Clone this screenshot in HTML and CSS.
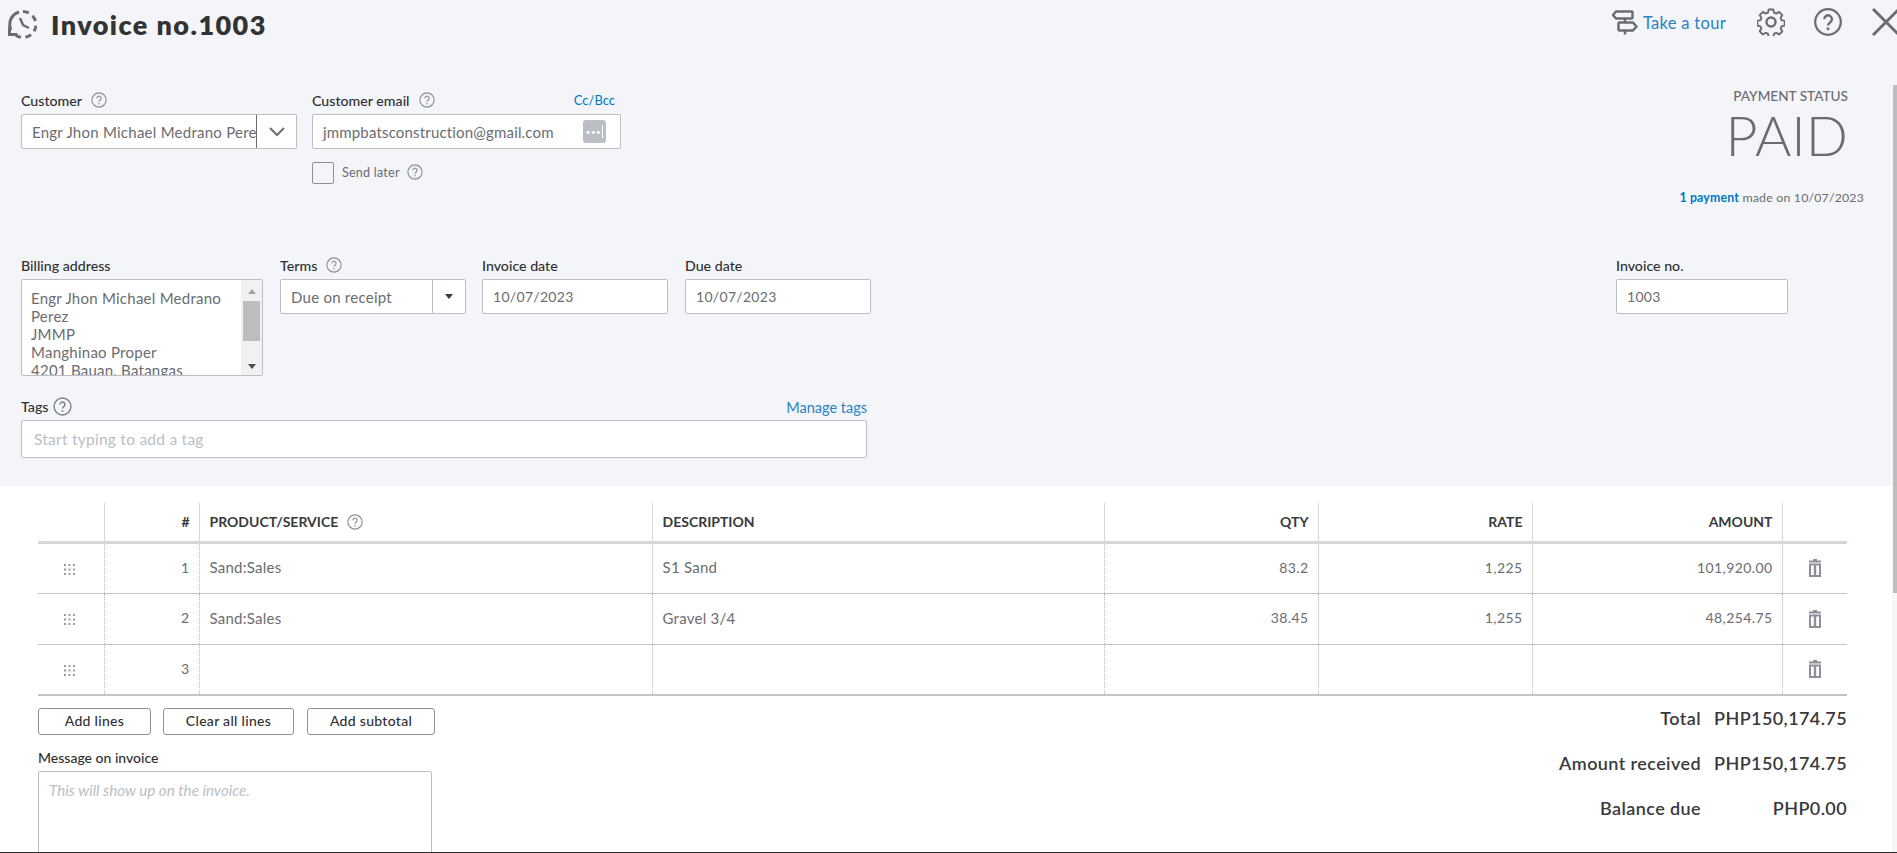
FILE: index.html
```html
<!DOCTYPE html>
<html lang="en">
<head>
<meta charset="utf-8">
<title>Invoice no.1003</title>
<link rel="stylesheet" href="styles.css">
</head>
<body>
<svg class="defs" width="0" height="0" aria-hidden="true">
  <symbol id="help" viewBox="0 0 18 18">
    <circle cx="9" cy="9" r="8" fill="none" stroke="currentColor" stroke-width="1.300"/>
    <path d="M6.700 7.100a2.300 2.300 0 1 1 3.700 1.800c-.9.7-1.400 1.100-1.400 2.100" fill="none" stroke="currentColor" stroke-width="1.400"/>
    <circle cx="9" cy="13.200" r=".9" fill="currentColor"/>
  </symbol>
  <symbol id="grip" viewBox="0 0 11 11">
    <g fill="#9a9b9f">
      <rect x="0" y="0" width="2" height="2"/><rect x="4.500" y="0" width="2" height="2"/><rect x="9" y="0" width="2" height="2"/>
      <rect x="0" y="4.500" width="2" height="2"/><rect x="4.500" y="4.500" width="2" height="2"/><rect x="9" y="4.500" width="2" height="2"/>
      <rect x="0" y="9" width="2" height="2"/><rect x="4.500" y="9" width="2" height="2"/><rect x="9" y="9" width="2" height="2"/>
    </g>
  </symbol>
  <symbol id="trash" viewBox="0 0 12 18">
    <path fill="#8d9096" fill-rule="evenodd" d="M4 0h4v1.500h4v2H0v-2h4zM0 4.500h12V18H0zM2 6.500V16h2.800V6.500zM7.200 6.500V16H10V6.500z"/>
  </symbol>
</svg>
<div class="page">
  <div class="top">
    <header class="head">
      <svg class="clock" viewBox="0 0 29 29" width="29" height="29">
        <g fill="none" stroke="#6b6c72" stroke-width="3">
          <path d="M3 20A13 13 0 0 1 11 2"/>
          <path d="M15 1.500A13 13 0 1 1 8 25.500" stroke-dasharray="6 4.600"/>
          <path d="M12 8l3 7 6 3" stroke-width="2.400"/>
          <path d="M1.500 16.500v8h8"/>
        </g>
      </svg>
      <h1 class="title">Invoice no.1003</h1>
      <div class="tools">
        <svg class="sign" viewBox="0 0 26 25" width="26" height="25">
          <g fill="none" stroke="#6b6c72" stroke-width="2.500" stroke-linejoin="round">
            <path d="M4 1.500h15.500q1 0 1 1v5q0 1-1 1H4L1 5z"/>
            <path d="M7.500 12.500H21l3.500 4-3.500 4H7.500q-1 0-1-1v-6q0-1 1-1z"/>
            <path d="M13 8.500v4M13 20.500v4"/>
          </g>
        </svg>
        <a class="tour">Take a tour</a>
        <svg class="gear" viewBox="0 0 28 28" width="28" height="28">
          <g fill="none" stroke="#6b6c72" stroke-linejoin="round">
            <circle cx="14" cy="14" r="4.500" stroke-width="2.400"/>
            <path stroke-width="1.900" d="M11.700 1.500h4.600l.8 3.200 2.200.9 2.800-1.700 3.200 3.200-1.700 2.800.9 2.200 3.200.8v4.600l-3.200.8-.9 2.200 1.700 2.800-3.200 3.200-2.800-1.700-2.200.9-.8 3.200h-4.600l-.8-3.200-2.200-.9-2.800 1.700-3.200-3.200 1.700-2.800-.9-2.200-3.200-.8v-4.600l3.200-.8.9-2.200-1.700-2.800 3.200-3.200 2.800 1.700 2.200-.9z"/>
          </g>
        </svg>
        <svg class="bighelp" viewBox="0 0 28 28" width="28" height="28">
          <circle cx="14" cy="14" r="12.800" fill="none" stroke="#6b6c72" stroke-width="2.200"/>
          <path d="M10.300 11.200a3.800 3.800 0 1 1 6 3c-1.500 1-2.300 1.700-2.300 3.400" fill="none" stroke="#6b6c72" stroke-width="2.400"/>
          <circle cx="14" cy="20.700" r="1.500" fill="#6b6c72"/>
        </svg>
        <svg class="close" viewBox="0 0 28 28" width="28" height="28">
          <path d="M1 1l26 26M27 1L1 27" fill="none" stroke="#6b6c72" stroke-width="3"/>
        </svg>
      </div>
    </header>

    <div class="row-customer">
      <div class="field customer">
        <div class="lab"><span>Customer</span><svg class="q"><use href="#help"/></svg></div>
        <div class="box combo">
          <span class="val clip">Engr Jhon Michael Medrano Perez</span>
          <span class="chev"><svg viewBox="0 0 16 10" width="16" height="10"><path d="M1 1l7 7 7-7" fill="none" stroke="#6b6c72" stroke-width="2"/></svg></span>
        </div>
      </div>
      <div class="field email">
        <div class="lab"><span>Customer email</span><svg class="q"><use href="#help"/></svg><a class="link right">Cc/Bcc</a></div>
        <div class="box">
          <span class="val mail">jmmpbatsconstruction@gmail.com</span>
          <span class="dots">•••<i class="caret"></i></span>
        </div>
        <div class="later"><span class="check"></span><span class="later-text">Send later</span><svg class="q"><use href="#help"/></svg></div>
      </div>
      <div class="status">
        <div class="status-label">PAYMENT STATUS</div>
        <div class="paid">PAID</div>
        <div class="made"><b>1 payment</b> made on 10/07/2023</div>
      </div>
    </div>

    <div class="row-billing">
      <div class="field billing">
        <div class="lab"><span>Billing address</span></div>
        <div class="addr">
          <div class="addr-text">Engr Jhon Michael Medrano Perez<br>JMMP<br>Manghinao Proper<br>4201 Bauan, Batangas</div>
          <div class="addr-bar"><i class="up"></i><i class="thumb"></i><i class="down"></i></div>
        </div>
      </div>
      <div class="field terms">
        <div class="lab"><span>Terms</span><svg class="q"><use href="#help"/></svg></div>
        <div class="box combo">
          <span class="val">Due on receipt</span>
          <span class="tri"><i></i></span>
        </div>
      </div>
      <div class="field date">
        <div class="lab"><span>Invoice date</span></div>
        <div class="box"><span class="val num">10/07/2023</span></div>
      </div>
      <div class="field date">
        <div class="lab"><span>Due date</span></div>
        <div class="box"><span class="val num">10/07/2023</span></div>
      </div>
      <div class="field invno">
        <div class="lab"><span>Invoice no.</span></div>
        <div class="box"><span class="val num">1003</span></div>
      </div>
    </div>

    <div class="field tags">
      <div class="lab"><span>Tags</span><svg class="q q-big"><use href="#help"/></svg><a class="link right manage">Manage tags</a></div>
      <div class="box tag-box"><span class="val ph">Start typing to add a tag</span></div>
    </div>
  </div>

  <div class="bottom">
    <table class="lines">
      <colgroup>
        <col class="c-grip"><col class="c-num"><col class="c-prod"><col class="c-desc"><col class="c-qty"><col class="c-rate"><col class="c-amt"><col class="c-del">
      </colgroup>
      <thead>
        <tr>
          <th></th><th class="r">#</th>
          <th>PRODUCT/SERVICE<svg class="q"><use href="#help"/></svg></th>
          <th>DESCRIPTION</th><th class="r">QTY</th><th class="r">RATE</th><th class="r">AMOUNT</th><th></th>
        </tr>
      </thead>
      <tbody>
        <tr>
          <td class="ic"><svg class="grip"><use href="#grip"/></svg></td><td class="r">1</td><td>Sand:Sales</td><td>S1 Sand</td><td class="r">83.2</td><td class="r">1,225</td><td class="r">101,920.00</td>
          <td class="ic"><svg class="trash"><use href="#trash"/></svg></td>
        </tr>
        <tr>
          <td class="ic"><svg class="grip"><use href="#grip"/></svg></td><td class="r">2</td><td>Sand:Sales</td><td>Gravel 3/4</td><td class="r">38.45</td><td class="r">1,255</td><td class="r">48,254.75</td>
          <td class="ic"><svg class="trash"><use href="#trash"/></svg></td>
        </tr>
        <tr>
          <td class="ic"><svg class="grip"><use href="#grip"/></svg></td><td class="r">3</td><td></td><td></td><td></td><td></td><td></td>
          <td class="ic"><svg class="trash"><use href="#trash"/></svg></td>
        </tr>
      </tbody>
    </table>
    <div class="under">
      <div class="under-left">
        <div class="btns">
          <button class="btn b1">Add lines</button>
          <button class="btn b2">Clear all lines</button>
          <button class="btn b3">Add subtotal</button>
        </div>
        <div class="msg-label">Message on invoice</div>
        <div class="msg"><span>This will show up on the invoice.</span></div>
      </div>
      <div class="totals">
        <div class="tot"><span>Total</span><span class="amt">PHP150,174.75</span></div>
        <div class="tot"><span>Amount received</span><span class="amt">PHP150,174.75</span></div>
        <div class="tot"><span>Balance due</span><span class="amt">PHP0.00</span></div>
      </div>
    </div>
  </div>
  <div class="scrollbar"><i></i></div>
</div>
</body>
</html>
```
FILE: styles.css
```css
* { box-sizing: border-box; }
html, body { margin: 0; height: 100%; overflow: hidden; }
body { background: #fff; font-family: Lato, "Open Sans", sans-serif; font-size: 14px; color: #393a3d; }
.defs { display: block; height: 0; }
.page { position: relative; width: 1897px; height: 853px; overflow: hidden; border-bottom: 1px solid #2c2c2e; }

.top { height: 486px; background: #f4f5f8; padding-left: 21px; }
.head { height: 48px; display: flex; align-items: center; margin-left: -13px; }
.clock { flex: none; margin-right: 14px; }
.title { margin: 0; font-size: 27px; font-weight: 800; color: #333; letter-spacing: 1.450px; }
.tools { margin-left: auto; display: flex; align-items: center; margin-bottom: 5px; }
.sign { margin-top: 2px; }
.tour { color: #2a82c7; font-size: 16.500px; margin: 2px 31px 0 5px; letter-spacing: .3px; }
.gear { margin-right: 29px; }
.bighelp { margin-right: 30px; }
.close { margin-right: -3px; }

.field { display: flex; flex-direction: column; }
.lab { display: flex; align-items: center; height: 16px; padding-bottom: 2px; font-size: 14.200px; font-weight: 500; color: #2f3033; margin-bottom: 5px; white-space: nowrap; }
.q { width: 16px; height: 16px; margin-left: 9px; color: #8d9096; flex: none; font-weight: 400; }
.q-big { width: 19px; height: 19px; margin-left: 5px; color: #7d8086; }
.right { margin-left: auto; }
.link { color: #0077c5; font-size: 13px; font-weight: 400; }
.box { height: 35px; background: #fff; border: 1px solid #babec5; border-radius: 2px; display: flex; align-items: center; padding-left: 10px; }
.val { font-size: 15px; color: #6b6c72; letter-spacing: .25px; white-space: nowrap; }
.num { font-size: 14px; letter-spacing: .3px; }
.mail { letter-spacing: .17px; }
.combo { padding-right: 0; }
.clip { flex: 1; min-width: 0; overflow: hidden; }

.row-customer { display: flex; height: 210px; padding-top: 45px; gap: 15px; }
.customer { width: 276px; }
.email { width: 309px; }
.email .link { margin-right: 6px; }
.chev { width: 40px; height: 100%; flex: none; border-left: 1px solid #6b6c72; display: flex; align-items: center; justify-content: center; }
.email .val { flex: 1; }
.dots { width: 23px; height: 23px; flex: none; margin-right: 14px; background: #babec5; color: #fff; font-size: 8px; border-radius: 3px; display: flex; align-items: center; justify-content: center; letter-spacing: .5px; }
.caret { width: 1px; height: 13px; background: #fff; margin-left: 1px; }
.later { display: flex; align-items: center; margin-top: 13px; }
.check { width: 22px; height: 22px; border: 1px solid #8d9096; border-radius: 2px; background: #f4f5f8; }
.later-text { font-size: 12.500px; color: #6b6c72; margin: 0 0 2px 8px; letter-spacing: .25px; }
.later .q { margin: 0 0 2px 7px; }

.status { margin-left: auto; width: 260px; text-align: right; margin-top: -5px; padding-right: 49px; }
.status-label { font-size: 13.600px; font-weight: 500; color: #6b6c72; line-height: 16px; }
.paid { font-size: 55.500px; font-weight: 300; color: #6b6c72; line-height: 54px; margin-top: 4px; }
.made { font-size: 12.300px; color: #6b6c72; margin-top: 28px; margin-right: -16px; letter-spacing: .2px; white-space: nowrap; }
.made b { color: #0077c5; font-weight: 700; }

.row-billing { display: flex; gap: 17px; height: 141px; }
.billing { width: 242px; }
.addr { height: 97px; display: flex; background: #fff; border: 1px solid #babec5; border-radius: 2px; overflow: hidden; }
.addr-text { flex: 1; padding: 9px 10px 0 9px; font-size: 15px; line-height: 18px; color: #6b6c72; letter-spacing: .25px; overflow: hidden; }
.addr-bar { width: 21px; flex: none; background: #f1f1f1; display: flex; flex-direction: column; align-items: center; padding-top: 9px; }
.addr-bar i { display: block; }
.up { width: 0; height: 0; border: 4.500px solid transparent; border-top: 0; border-bottom: 5px solid #a3a3a3; }
.thumb { width: 17px; height: 40px; background: #bdbdbd; margin-top: 7px; }
.down { width: 0; height: 0; border: 4.500px solid transparent; border-bottom: 0; border-top: 5px solid #505050; margin-top: 23px; }
.terms { width: 186px; margin-right: -1px; }
.terms .val { flex: 1; }
.tri { width: 33px; height: 100%; flex: none; border-left: 1px solid #babec5; display: flex; align-items: center; justify-content: center; }
.tri i { width: 0; height: 0; border: 4px solid transparent; border-bottom: 0; border-top: 5px solid #393a3d; }
.date { width: 186px; }
.invno { width: 172px; margin-left: 728px; }

.tags { width: 846px; }
.tag-box { height: 38px; padding-left: 12px; }
.ph { color: #babec5; font-size: 15.500px; }
.manage { color: #2a82c7; font-size: 14.500px; margin-top: 2px; }

.bottom { padding: 17px 50px 0 38px; }
.lines { width: 1809px; border-collapse: collapse; table-layout: fixed; }
.c-grip { width: 66px; } .c-num { width: 95px; } .c-prod { width: 453px; } .c-desc { width: 452px; }
.c-qty { width: 214px; } .c-rate { width: 214px; } .c-amt { width: 250px; } .c-del { width: 65px; }
.lines th, .lines td { padding: 0 9px 0 10px; text-align: left; overflow: hidden; }
.lines th { height: 39px; font-size: 14px; font-weight: 700; color: #393a3d; border-left: 1px solid #d4d7dc; border-bottom: 3px solid #d4d7dc; white-space: nowrap; }
.lines th:first-child, .lines td:first-child { border-left: 0; }
.lines th .q { vertical-align: -3px; }
.lines td { height: 51px; padding-bottom: 2px; font-size: 15px; color: #6b6c72; border-left: 1px dotted #bdbdbd; border-bottom: 1px solid #c4c4c4; letter-spacing: .25px; }
.lines tbody tr:last-child td { border-bottom: 2px solid #c4c4c4; }
.lines .r { text-align: right; }
.lines td.r { font-size: 14px; letter-spacing: .4px; }
.lines .ic { text-align: center; padding: 0 0 2px; }
.lines td.ic:first-child { padding-right: 2px; }
.grip { width: 11px; height: 11px; display: inline-block; vertical-align: middle; }
.trash { width: 12px; height: 18px; display: inline-block; vertical-align: middle; }

.under { display: flex; justify-content: space-between; width: 1809px; }
.btns { display: flex; gap: 12px; padding-top: 12px; }
.btn { height: 27px; padding: 0 0 2px; background: #fff; border: 1px solid #8d9096; border-radius: 3px; font: 500 14px Lato, "Open Sans", sans-serif; color: #2f3033; letter-spacing: .3px; }
.b1 { width: 113px; } .b2 { width: 131px; } .b3 { width: 128px; margin-left: 1px; }
.msg-label { margin-top: 15px; font-size: 14px; font-weight: 500; line-height: 16px; color: #2f3033; }
.msg { width: 394px; height: 120px; margin-top: 5px; border: 1px solid #babec5; border-radius: 2px; padding: 9px 10px; color: #babec5; font-style: italic; font-size: 15.200px; }
.totals { padding-top: 10px; display: flex; flex-direction: column; gap: 20px; }
.tot { display: flex; justify-content: flex-end; font-size: 18px; font-weight: 600; line-height: 25px; color: #393a3d; letter-spacing: .4px; }
.amt { width: 146px; text-align: right; }

.scrollbar { position: absolute; top: 64px; right: 0; bottom: 0; width: 5px; background: #f6f6f6; padding-top: 21px; }
.scrollbar i { display: block; width: 4px; height: 508px; margin-left: 1px; background: #bdbdbd; }
```
